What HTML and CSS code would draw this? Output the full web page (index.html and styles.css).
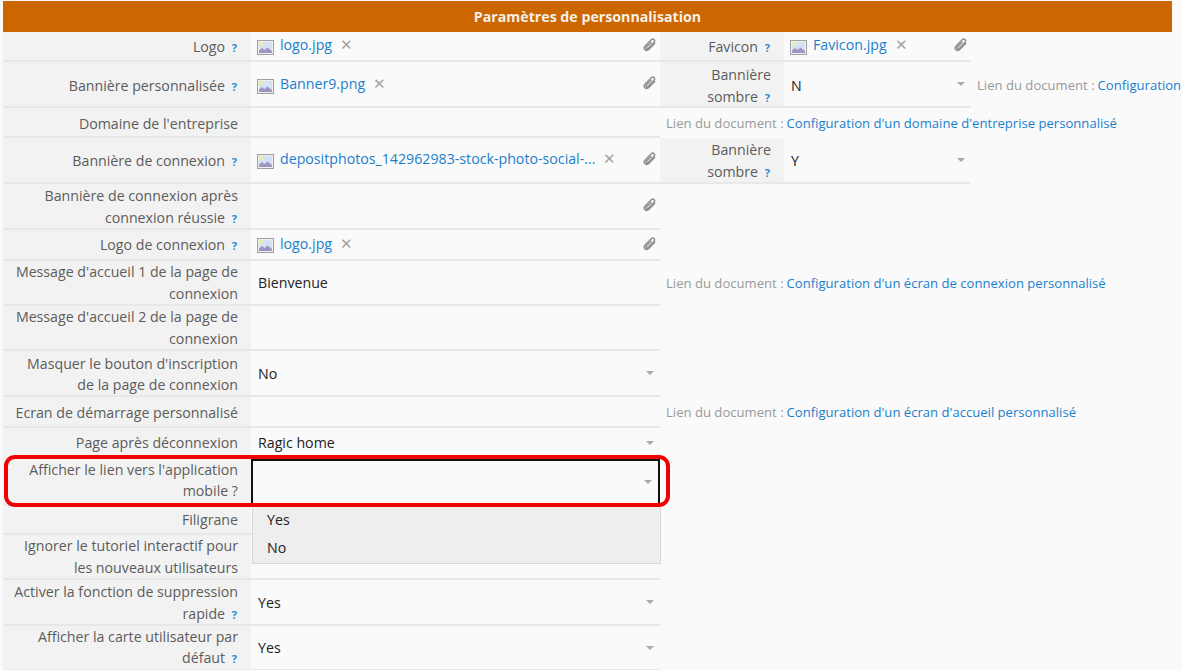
FILE: index.html
```html
<!DOCTYPE html>
<html lang="fr">
<head>
<meta charset="utf-8">
<title>Paramètres de personnalisation</title>
<link rel="stylesheet" href="styles.css">
</head>
<body>
<svg class="defs" width="0" height="0" aria-hidden="true">
  <symbol id="img" viewBox="0 0 17 15">
    <rect x=".5" y=".5" width="16" height="14" fill="#efefef" stroke="#a0a0a0"/>
    <rect x="2" y="2" width="13" height="11" fill="#d5e2f4"/>
    <rect x="2.500" y="2.500" width="3" height="3" fill="#f6f08a"/>
    <path d="M2 13V10.500l3-2.500 2.500 2 3-2.500 4.500 3.500V13z" fill="#a095c2"/>
  </symbol>
  <symbol id="clip" viewBox="0 0 14 14">
    <path d="M12 5 6 11.300c-1.300 1.300-3 1.400-4 .4s-.9-2.700.4-4l5.600-5.700c1-1 2.300-1.100 3.100-.3s.7 2.100-.3 3.100L5.300 10.400c-.6.600-1.300.7-1.800.2s-.4-1.200.2-1.800l4.800-4.900" fill="none" stroke="#8f8f8f" stroke-width="1.500"/>
  </symbol>
</svg>
<main class="page">
  <h1 class="title">Paramètres de personnalisation</h1>
  <div class="form">
    <div class="l"><span>Logo <span class="q">?</span></span></div>
    <div class="v"><svg class="ficon"><use href="#img"/></svg><a class="file">logo.jpg</a><span class="x">✕</span><svg class="clip"><use href="#clip"/></svg></div>
    <div class="l l2"><span>Favicon <span class="q">?</span></span></div>
    <div class="v v2"><svg class="ficon"><use href="#img"/></svg><a class="file">Favicon.jpg</a><span class="x">✕</span><svg class="clip"><use href="#clip"/></svg></div>

    <div class="l down"><span>Bannière personnalisée <span class="q">?</span></span></div>
    <div class="v down"><svg class="ficon"><use href="#img"/></svg><a class="file">Banner9.png</a><span class="x">✕</span><svg class="clip"><use href="#clip"/></svg></div>
    <div class="l l2 down"><span>Bannière<br>sombre <span class="q">?</span></span></div>
    <div class="v v2 sel down">N<i class="caret"></i></div>
    <div class="note">Lien du document : <a>Configuration</a></div>

    <div class="l down"><span>Domaine de l'entreprise</span></div>
    <div class="v"></div>
    <div class="note wide">Lien du document : <a>Configuration d'un domaine d'entreprise personnalisé</a></div>

    <div class="l"><span>Bannière de connexion <span class="q">?</span></span></div>
    <div class="v"><svg class="ficon"><use href="#img"/></svg><a class="file">depositphotos_142962983-stock-photo-social-...</a><span class="x">✕</span><svg class="clip"><use href="#clip"/></svg></div>
    <div class="l l2"><span>Bannière<br>sombre <span class="q">?</span></span></div>
    <div class="v v2 sel">Y<i class="caret"></i></div>

    <div class="l"><span>Bannière de connexion après<br>connexion réussie <span class="q">?</span></span></div>
    <div class="v"><svg class="clip"><use href="#clip"/></svg></div>

    <div class="l"><span>Logo de connexion <span class="q">?</span></span></div>
    <div class="v"><svg class="ficon"><use href="#img"/></svg><a class="file">logo.jpg</a><span class="x">✕</span><svg class="clip"><use href="#clip"/></svg></div>

    <div class="l up"><span>Message d'accueil 1 de la page de<br>connexion</span></div>
    <div class="v sel up">Bienvenue</div>
    <div class="note wide">Lien du document : <a>Configuration d'un écran de connexion personnalisé</a></div>

    <div class="l up"><span>Message d'accueil 2 de la page de<br>connexion</span></div>
    <div class="v"></div>

    <div class="l"><span>Masquer le bouton d'inscription<br>de la page de connexion</span></div>
    <div class="v sel">No<i class="caret"></i></div>

    <div class="l"><span>Ecran de démarrage personnalisé</span></div>
    <div class="v"></div>
    <div class="note wide">Lien du document : <a>Configuration d'un écran d'accueil personnalisé</a></div>

    <div class="l up"><span>Page après déconnexion</span></div>
    <div class="v sel up">Ragic home<i class="caret"></i></div>

    <div class="l up2"><span>Afficher le lien vers l'application<br>mobile ?</span></div>
    <div class="v sel focus"><i class="caret"></i></div>

    <div class="l"><span>Filigrane</span></div>
    <div class="v"></div>

    <div class="l up"><span>Ignorer le tutoriel interactif pour<br>les nouveaux utilisateurs</span></div>
    <div class="v"></div>

    <div class="l"><span>Activer la fonction de suppression<br>rapide <span class="q">?</span></span></div>
    <div class="v sel">Yes<i class="caret"></i></div>

    <div class="l up"><span>Afficher la carte utilisateur par<br>défaut <span class="q">?</span></span></div>
    <div class="v sel up">Yes<i class="caret"></i></div>

    <ul class="menu">
      <li>Yes</li>
      <li>No</li>
    </ul>
    <div class="mark"></div>
  </div>
</main>
</body>
</html>
```
FILE: styles.css
```css
* { box-sizing: border-box; }
html, body { margin: 0; height: 100%; overflow: hidden; background: #fafafa; }
body { font: 14.2px/21.5px "Open Sans", "Liberation Sans", sans-serif; color: #5c5c5c; }
.defs { position: absolute; }
.page { padding: 1px 0 0 3px; width: 1182px; }
.title {
  margin: 0;
  width: 1169px;
  height: 31px;
  background: #cc6600;
  color: #f5f0e8;
  font-size: 14.2px;
  font-weight: 700;
  line-height: 32px;
  text-align: center;
}
.form {
  position: relative;
  display: grid;
  grid-template-columns: 248px 409px 124px 187px 211px;
  grid-template-rows: 30px 46px 30px 46px 46px 31px 45px 45px 46px 31px 31px 46px 30px 45px 46px 45px;
  white-space: nowrap;
}
.l {
  grid-column: 1;
  display: flex;
  align-items: center;
  justify-content: flex-end;
  padding: 2px 13px 0 0;
  background: #f2f2f2;
  border-bottom: 2px solid #e8e8e8;
  text-align: right;
}
.l2 { grid-column: 3; white-space: normal; }
.v {
  grid-column: 2;
  position: relative;
  display: flex;
  align-items: center;
  padding: 2px 0 0 6px;
  border-bottom: 2px solid #e8e8e8;
}
.v2 { grid-column: 4; }
.sel { color: #222; padding-left: 7px; }
.l.down, .v.down { padding-top: 4px; }
.l.up, .v.up { padding-top: 0; }
.l.up2 { padding-top: 0; padding-bottom: 2px; }
.q { margin: 0 1px 0 3px; color: #2a8bd2; font-size: 11px; font-weight: 700; }
.ficon { flex: none; width: 17px; height: 15px; margin-right: 6px; }
.file { color: #1b7fcc; position: relative; top: -2px; }
.x { margin-left: 8px; color: #a3a3a3; font-size: 15px; position: relative; top: -2px; }
.clip { position: absolute; right: 3px; top: 50%; width: 14px; height: 14px; margin-top: -8px; }
.caret {
  position: absolute;
  right: 6px;
  top: 50%;
  margin-top: -2px;
  border: 4px solid transparent;
  border-top: 4px solid #aaa;
  border-bottom: 0;
}
.note { grid-column: 5; padding: 1px 0 0 6px; display: flex; align-items: center; color: #999; font-size: 13.1px; gap: 3px; }
.note.wide { grid-column: 3 / 6; }
.note a { color: #1b7fcc; }
.focus {
  padding: 0 0 0 5px;
  border: 2px solid #111;
  border-bottom: 2px solid #555;
}
.menu {
  position: absolute;
  left: 249px;
  top: 473px;
  width: 409px;
  height: 59px;
  margin: 0;
  padding: 1px 0 0;
  list-style: none;
  background: #eeeeee;
  border: 1px solid #d8d8d8;
  border-top: 0;
  color: #222;
}
.menu li { height: 28px; line-height: 28px; padding-left: 14px; }
.mark {
  position: absolute;
  left: 1px;
  top: 423px;
  width: 666px;
  height: 52px;
  border: 4px solid #f00000;
  border-radius: 11px;
}
```
